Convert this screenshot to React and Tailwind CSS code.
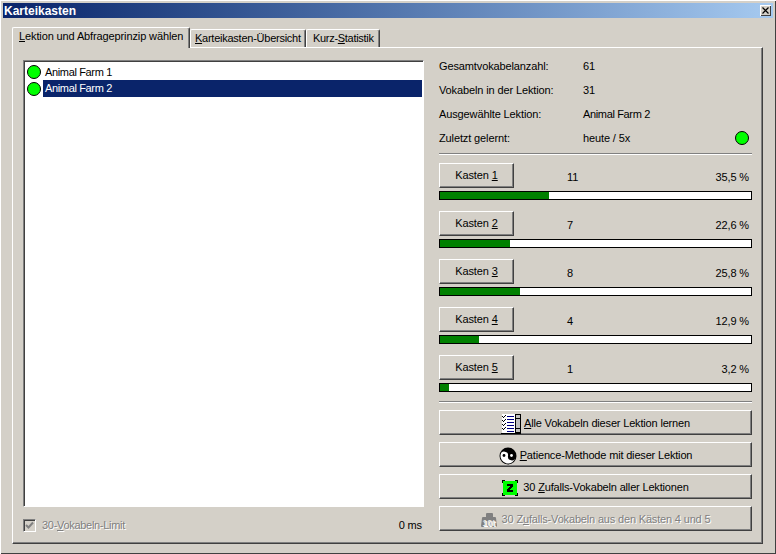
const raised = 'border border-t-white border-l-white border-r-[#404040] border-b-[#404040] shadow-[inset_-1px_-1px_0_#808080]'
const tabCls = 'flex h-[18px] items-center rounded-t-[2px] border-t border-l border-r border-t-white border-l-white border-r-[#404040] shadow-[inset_-1px_0_0_#808080]'

const boxes = [
  { n: 1, count: 11, pct: '35,5 %', w: 35.2 },
  { n: 2, count: 7, pct: '22,6 %', w: 22.4 },
  { n: 3, count: 8, pct: '25,8 %', w: 25.6 },
  { n: 4, count: 4, pct: '12,9 %', w: 12.6 },
  { n: 5, count: 1, pct: '3,2 %', w: 2.9 },
]

function Dot() {
  return <span className="block h-[14px] w-[14px] shrink-0 rounded-full border border-black bg-[#00ff00]" />
}

function InfoRow({ label, value, dot, tight }) {
  return (
    <div className="flex h-6 items-center">
      <span className="w-[144px]">{label}</span>
      <span className={`flex-1 ${tight ? 'tracking-[-0.35px]' : ''}`}>{value}</span>
      {dot && <span className="mr-[3px]"><Dot /></span>}
    </div>
  )
}

function ListIcon() {
  return (
    <svg width="20" height="20" viewBox="0 0 20 20" shapeRendering="crispEdges">
      <rect x="1" y="0" width="13" height="19" fill="#fff" />
      <path d="M6 2.5h7M6 5.5h7M6 8.5h7M6 11.5h7M6 14.5h7M6 17.5h7" stroke="#000080" fill="none" />
      <path d="M1 2h1v1h1V2h1V1h1v1H4v1H3v1H2V3H1zM1 6h1v1h1V6h1V5h1v1H4v1H3v1H2V7H1zM1 10h1v1h1v-1h1V9h1v1H4v1H3v1H2v-1H1zM1 14h1v1h1v-1h1v-1h1v1H4v1H3v1H2v-1H1z" fill="#000" />
      <rect x="14.5" y="0.5" width="5" height="18" fill="#c0c0c0" stroke="#000" />
      <path d="M15 4.5h4M15 14.5h4" stroke="#000" />
      <path d="M0 19.5h20" stroke="#000" />
    </svg>
  )
}

function YinYang() {
  return (
    <svg width="18" height="18" viewBox="0 0 18 18">
      <circle cx="9" cy="9" r="8.5" fill="#000" />
      <path d="M1.5 9a7.5 7.5 0 0 0 15 0a3.75 3.75 0 0 1-7.5 0a3.75 3.75 0 0 0-7.5 0z" fill="#fff" transform="rotate(10 9 9)" />
      <circle cx="5" cy="8.5" r="1.4" fill="#000" />
      <circle cx="12.5" cy="8.5" r="1.4" fill="#fff" />
    </svg>
  )
}

function ZIcon() {
  return (
    <svg width="16" height="16" viewBox="0 0 16 16" shapeRendering="crispEdges">
      <rect x="1" y="1" width="14" height="14" fill="#00ff00" />
      <path d="M0 0h3v1H1v2H0zM13 0h3v3h-1V1h-2zM0 13h1v2h2v1H0zM15 13h1v3h-3v-1h2z" fill="#000" />
      <path d="M5 4h6v2l-3 4h3v2H5v-2l3-4H5z" fill="#000" />
    </svg>
  )
}

function WeightIcon() {
  return (
    <svg width="16" height="14" viewBox="0 0 16 14">
      <path d="M5 1q0-1 1-1h5q1 0 1 1v3h2q1 0 1 1l1 8q0 1-1 1H1q-1 0-1-1l1-8q0-1 1-1h3z" fill="#808080" />
      <text x="1.5" y="12.5" fontSize="9" fontWeight="700" fill="#e8e6e0" fontFamily="'Liberation Sans', sans-serif">10t</text>
    </svg>
  )
}

function BigButton({ icon, gap = 'gap-[3px]', disabled, children }) {
  return (
    <button className={`${raised} flex h-[25px] w-full items-center justify-center pt-[2px] tracking-[-0.17px] ${gap} ${disabled ? 'text-[#808080] [text-shadow:1px_1px_0_#fff]' : ''}`}>
      {icon}
      <span>{children}</span>
    </button>
  )
}

export default function App() {
  return (
    <div className="flex h-[554px] w-[776px] flex-col overflow-hidden bg-[#d4d0c8] pt-[3px] pr-[3px] pb-[1px] pl-[3px] font-['Liberation_Sans',Arial,sans-serif] text-[11px] leading-none tracking-[-0.12px] text-black shadow-[inset_1px_1px_0_#fff,inset_-1px_-1px_0_#404040]">
      <div className="flex h-[15px] shrink-0 items-center justify-between bg-gradient-to-r from-[#0a246a] to-[#a6caf0] pr-[2px] pl-[1px]">
        <span className="text-[12px] font-bold tracking-normal text-white">Karteikasten</span>
        <button className="flex h-[11px] w-[11px] items-center justify-center bg-[#d4d0c8] shadow-[inset_1px_1px_0_#fff,inset_-1px_-1px_0_#404040]">
          <svg width="7" height="7" viewBox="0 0 7 7"><path d="M.5.5l6 6M6.5.5l-6 6" stroke="#000" strokeWidth="1.2" /></svg>
        </button>
      </div>

      <div className="flex flex-1 flex-col pt-[9px] pr-[10px] pb-[9px] pl-[9px]">
        <div className="flex h-[20px] shrink-0 items-end">
          <div className="relative z-10 -mb-[1px] flex h-[21px] w-[178px] items-center rounded-t-[2px] border-t border-l border-r border-t-white border-l-white border-r-[#404040] bg-[#d4d0c8] pb-[3px] pl-[6px] shadow-[inset_-1px_0_0_#808080]">
            <span><u>L</u>ektion und Abfrageprinzip wählen</span>
          </div>
          <div className={`${tabCls} w-[116px] pl-[4px] tracking-[-0.25px]`}>
            <span><u>K</u>arteikasten-Übersicht</span>
          </div>
          <div className={`${tabCls} w-[74px] pl-[6px] tracking-[-0.3px]`}>
            <span>Kurz-<u>S</u>tatistik</span>
          </div>
        </div>

        <div className="flex flex-1 border border-t-white border-l-white border-r-[#404040] border-b-[#404040] pt-[12px] pr-[10px] pl-[10px] shadow-[inset_-1px_-1px_0_#808080]">
          <div className="flex w-[401px] shrink-0 flex-col">
            <div className="h-[447px] border border-t-[#808080] border-l-[#808080] border-r-white border-b-white bg-white pt-[3px] pr-[1px] pb-[2px] pl-[2px] tracking-[-0.35px] shadow-[inset_1px_1px_0_#404040]">
              <div className="flex h-[16px] items-center gap-[2px] pl-[1px]">
                <Dot />
                <span className="flex h-[16px] flex-1 items-center pl-[2px]">Animal Farm 1</span>
              </div>
              <div className="flex h-[17px] items-center gap-[2px] pl-[1px]">
                <Dot />
                <span className="flex h-[17px] flex-1 items-center bg-[#0a246a] pl-[2px] text-white">Animal Farm 2</span>
              </div>
            </div>
            <div className="mt-[12px] flex items-center">
              <span className="mr-[6px] flex h-[13px] w-[13px] items-center justify-center border border-t-[#808080] border-l-[#808080] border-r-white border-b-white bg-[#d4d0c8] shadow-[inset_1px_1px_0_#404040]">
                <svg width="9" height="9" viewBox="0 0 9 9"><path d="M1 4l2.5 2.5L8 1.5" fill="none" stroke="#808080" strokeWidth="2" /></svg>
              </span>
              <span className="tracking-[-0.3px] text-[#808080] [text-shadow:1px_1px_0_#fff]">30-<u>V</u>okabeln-Limit</span>
              <span className="mr-[2px] ml-auto">0 ms</span>
            </div>
          </div>

          <div className="ml-[15px] flex w-[313px] shrink-0 flex-col">
            <div className="-mt-[6px]">
              <InfoRow label="Gesamtvokabelanzahl:" value="61" />
              <InfoRow label="Vokabeln in der Lektion:" value="31" />
              <InfoRow label="Ausgewählte Lektion:" value="Animal Farm 2" tight />
              <InfoRow label="Zuletzt gelernt:" value="heute / 5x" dot />
            </div>
            <div className="mt-[3px] h-[2px] border-t border-b border-t-[#808080] border-b-white" />

            <div className="mt-[8px] flex flex-col gap-[11px]">
              {boxes.map((b) => (
                <div key={b.n}>
                  <div className="flex h-[25px] items-center">
                    <button className={`${raised} h-[25px] w-[75px]`}>Kasten <u>{b.n}</u></button>
                    <span className="mt-[4px] ml-[53px]">{b.count}</span>
                    <span className="mt-[4px] mr-[3px] ml-auto">{b.pct}</span>
                  </div>
                  <div className="mt-[3px] h-[9px] border border-black bg-white">
                    <div className="h-full bg-[#008000]" style={{ width: `${b.w}%` }} />
                  </div>
                </div>
              ))}
            </div>

            <div className="mt-[9px] h-[2px] border-t border-b border-t-[#808080] border-b-white" />

            <div className="mt-[7px] flex flex-col gap-[7px]">
              <BigButton icon={<ListIcon />}><u>A</u>lle Vokabeln dieser Lektion lernen</BigButton>
              <BigButton icon={<YinYang />}><u>P</u>atience-Methode mit dieser Lektion</BigButton>
              <BigButton icon={<ZIcon />} gap="gap-[5px]">30 <u>Z</u>ufalls-Vokabeln aller Lektionen</BigButton>
              <BigButton icon={<WeightIcon />} gap="gap-[5px]" disabled>30 Z<u>u</u>falls-Vokabeln aus den Kästen 4 und 5</BigButton>
            </div>
          </div>
        </div>
      </div>
    </div>
  )
}
